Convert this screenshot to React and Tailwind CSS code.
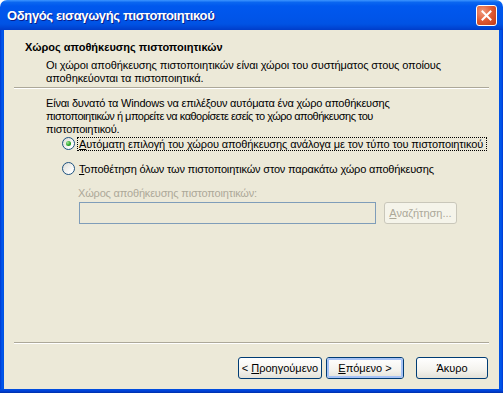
import React from "react";

const font = { fontFamily: '"Liberation Sans", Arial, sans-serif' };

function Radio({ checked }) {
  return (
    <div className="w-[13px] h-[13px] rounded-full border border-[#1C5180] bg-[linear-gradient(135deg,#DCDCD5_0%,#FFFFFF_80%)] flex items-center justify-center shrink-0">
      {checked && (
        <div className="w-[5px] h-[5px] rounded-full bg-[radial-gradient(circle_at_35%_35%,#A2E59B_0%,#21A121_60%,#1A8A1A_100%)]" />
      )}
    </div>
  );
}

function XPButton({ children, def, disabled, className = "" }) {
  if (disabled) {
    return (
      <div className={"h-[22px] rounded-[3px] border border-[#C9C7BA] bg-[#F5F4EA] text-[#ACA899] text-[11px] flex items-center justify-center " + className}>
        {children}
      </div>
    );
  }
  return (
    <div className={"h-[22px] rounded-[3px] border border-[#003C74] bg-[linear-gradient(to_bottom,#FFFFFF_0%,#F4F3EE_60%,#E3E1D8_100%)] text-black text-[11px] flex items-center justify-center " + className}>
      {def ? (
        <div className="w-full h-full rounded-[2px] border-2 border-[#A6C2F5] flex items-center justify-center">
          {children}
        </div>
      ) : (
        children
      )}
    </div>
  );
}

function Sep({ className = "" }) {
  return (
    <div className={"flex flex-col " + className}>
      <div className="h-px bg-[#ACA899]" />
      <div className="h-px bg-white" />
    </div>
  );
}

export default function App() {
  return (
    <div className="w-[503px] h-[393px] flex flex-col overflow-hidden text-[11px] text-black" style={font}>
      {/* title bar */}
      <div className="h-[30px] rounded-t-[7px] bg-[linear-gradient(to_bottom,#3D95FF_0%,#0A66F0_8%,#0058EE_20%,#0055EA_55%,#0053E4_80%,#0046D5_92%,#003CC8_100%)] flex items-center pl-[7px] pr-[6px] shrink-0">
        <div className="flex-1 text-white font-bold text-[13px] [text-shadow:1px_1px_0_#0A1E8A] tracking-[-0.35px] pt-[1px] whitespace-nowrap">
          Οδηγός εισαγωγής πιστοποιητικού
        </div>
        <div className="w-[21px] h-[21px] rounded-[3px] border border-white bg-[radial-gradient(circle_at_30%_30%,#F09A7C_0%,#E05A33_50%,#C23A14_100%)] flex items-center justify-center">
          <svg width="11" height="11" viewBox="0 0 11 11">
            <path d="M1.5 1.5 L9.5 9.5 M9.5 1.5 L1.5 9.5" stroke="white" strokeWidth="2" strokeLinecap="square" />
          </svg>
        </div>
      </div>

      <div className="flex flex-1">
        <div className="w-[4px] bg-[linear-gradient(to_right,#0038D0_0%,#0058EE_50%,#0050E0_100%)]" />
        <div className="flex-1 bg-[#ECE9D8] flex flex-col whitespace-nowrap">
          {/* header */}
          <div className="pt-[11px] pl-[21px] font-bold leading-[13px]">
            Χώρος αποθήκευσης πιστοποιητικών
          </div>
          <div className="pl-[42px] mt-[5px] leading-[13px]">
            <div className="tracking-[-0.1px]">Οι χώροι αποθήκευσης πιστοποιητικών είναι χώροι του συστήματος στους οποίους</div>
            <div className="tracking-[-0.1px]">αποθηκεύονται τα πιστοποιητικά.</div>
          </div>
          <Sep className="mx-[10px] mt-[2px]" />

          {/* body */}
          <div className="pl-[42px] mt-[8px] leading-[13px]">
            <div className="tracking-[-0.2px]">Είναι δυνατό τα Windows να επιλέξουν αυτόματα ένα χώρο αποθήκευσης</div>
            <div className="tracking-[-0.5px]">πιστοποιητικών ή μπορείτε να καθορίσετε εσείς το χώρο αποθήκευσης του</div>
            <div className="tracking-[-0.2px]">πιστοποιητικού.</div>
          </div>

          <div className="pl-[58px] mt-[1px] flex items-center gap-[2px] h-[13px]">
            <Radio checked />
            <div className="border border-dotted border-black pl-[1px] leading-[12px] w-[410px] h-[14px] mt-[1px] overflow-hidden tracking-[-0.12px]">
              <span className="underline">Α</span>υτόματη επιλογή του χώρου αποθήκευσης ανάλογα με τον τύπο του πιστοποιητικού
            </div>
          </div>

          <div className="pl-[58px] mt-[12px] flex items-center gap-[3px] h-[13px]">
            <Radio />
            <div className="leading-[13px] mt-[1px] pl-[1px] tracking-[-0.18px]">
              <span className="underline">Τ</span>οποθέτηση όλων των πιστοποιητικών στον παρακάτω χώρο αποθήκευσης
            </div>
          </div>

          <div className="pl-[74px] mt-[12px] leading-[13px] text-[#ACA899] tracking-[-0.18px]">
            Χώρος αποθήκευσης πιστοποιητικών:
          </div>

          <div className="pl-[75px] mt-[2px] flex items-center gap-[8px]">
            <div className="w-[297px] h-[22px] border border-[#7F9DB9] bg-[#ECE9D8]" />
            <XPButton disabled className="w-[73px]">
              <span><span className="underline">Α</span>ναζήτηση...</span>
            </XPButton>
          </div>

          <div className="flex-1" />
          <Sep className="mx-[10px]" />
          <div className="flex justify-end pr-[11px] mt-[13px] mb-[10px]">
            <XPButton className="w-[84px] px-[1px]">
              <span>&lt; <span className="underline">Π</span>ροηγούμενο</span>
            </XPButton>
            <XPButton def className="w-[78px] ml-[4px]">
              <span><span className="underline">Ε</span>πόμενο &gt;</span>
            </XPButton>
            <XPButton className="w-[72px] ml-[12px]">
              <span>Άκυρο</span>
            </XPButton>
          </div>
        </div>
        <div className="w-[4px] bg-[linear-gradient(to_right,#0050E0_0%,#0058EE_50%,#0038D0_100%)]" />
      </div>
      <div className="h-[4px] bg-[linear-gradient(to_bottom,#0050E0_0%,#0040D8_50%,#002FA8_100%)] shrink-0" />
    </div>
  );
}
